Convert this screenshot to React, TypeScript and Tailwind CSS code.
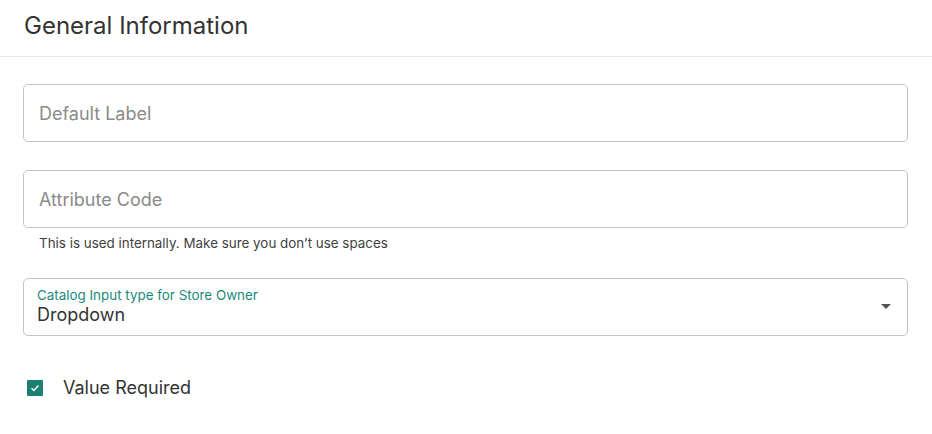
import React from "react";

export default function App() {
  return (
    <div className="w-[932px] h-[434px] bg-white overflow-hidden" style={{ fontFamily: "Inter, 'Noto Sans', sans-serif" }}>
      <div className="h-[57px] border-b border-[#e6e6e6] pl-6 pt-[10px]">
        <h2 className="text-[24px] leading-[32px] text-[#333333] font-normal">General Information</h2>
      </div>
      <div className="pl-[23px] pr-[24px] pt-[27px]">
        <div className="h-[58px] border border-[#c4c4c4] rounded-[5px] flex items-center px-[15px]">
          <span className="text-[18px] text-[#8a8a8a]">Default Label</span>
        </div>
        <div className="mt-[28px] h-[58px] border border-[#c4c4c4] rounded-[5px] flex items-center px-[15px]">
          <span className="text-[18px] text-[#8a8a8a]">Attribute Code</span>
        </div>
        <p className="pl-[16px] mt-[6px] text-[13.4px] leading-[18px] text-[#3f3f3f]">This is used internally. Make sure you don’t use spaces</p>
        <div className="mt-[26px] h-[58px] border border-[#c4c4c4] rounded-[5px] flex items-center pl-[13px] pr-[16px]">
          <div className="flex-1 flex flex-col">
            <span className="text-[13.4px] leading-[16px] text-[#1a8a7b]">Catalog Input type for Store Owner</span>
            <span className="text-[18px] leading-[24px] text-[#333333]">Dropdown</span>
          </div>
          <svg width="10" height="5" viewBox="0 0 10 5" className="mt-[-2px]">
            <path d="M0 0h10L5 5z" fill="#555555" />
          </svg>
        </div>
        <div className="mt-[38px] flex items-center pl-[4px]">
          <div className="w-4 h-4 bg-[#1d7f72] rounded-[1px] flex items-center justify-center">
            <svg width="12" height="12" viewBox="0 0 12 12">
              <path d="M2.5 6.2l2.3 2.3 4.7-5" stroke="white" strokeWidth="1.4" fill="none" />
            </svg>
          </div>
          <span className="ml-[20px] text-[18px] text-[#333333]">Value Required</span>
        </div>
      </div>
    </div>
  );
}
